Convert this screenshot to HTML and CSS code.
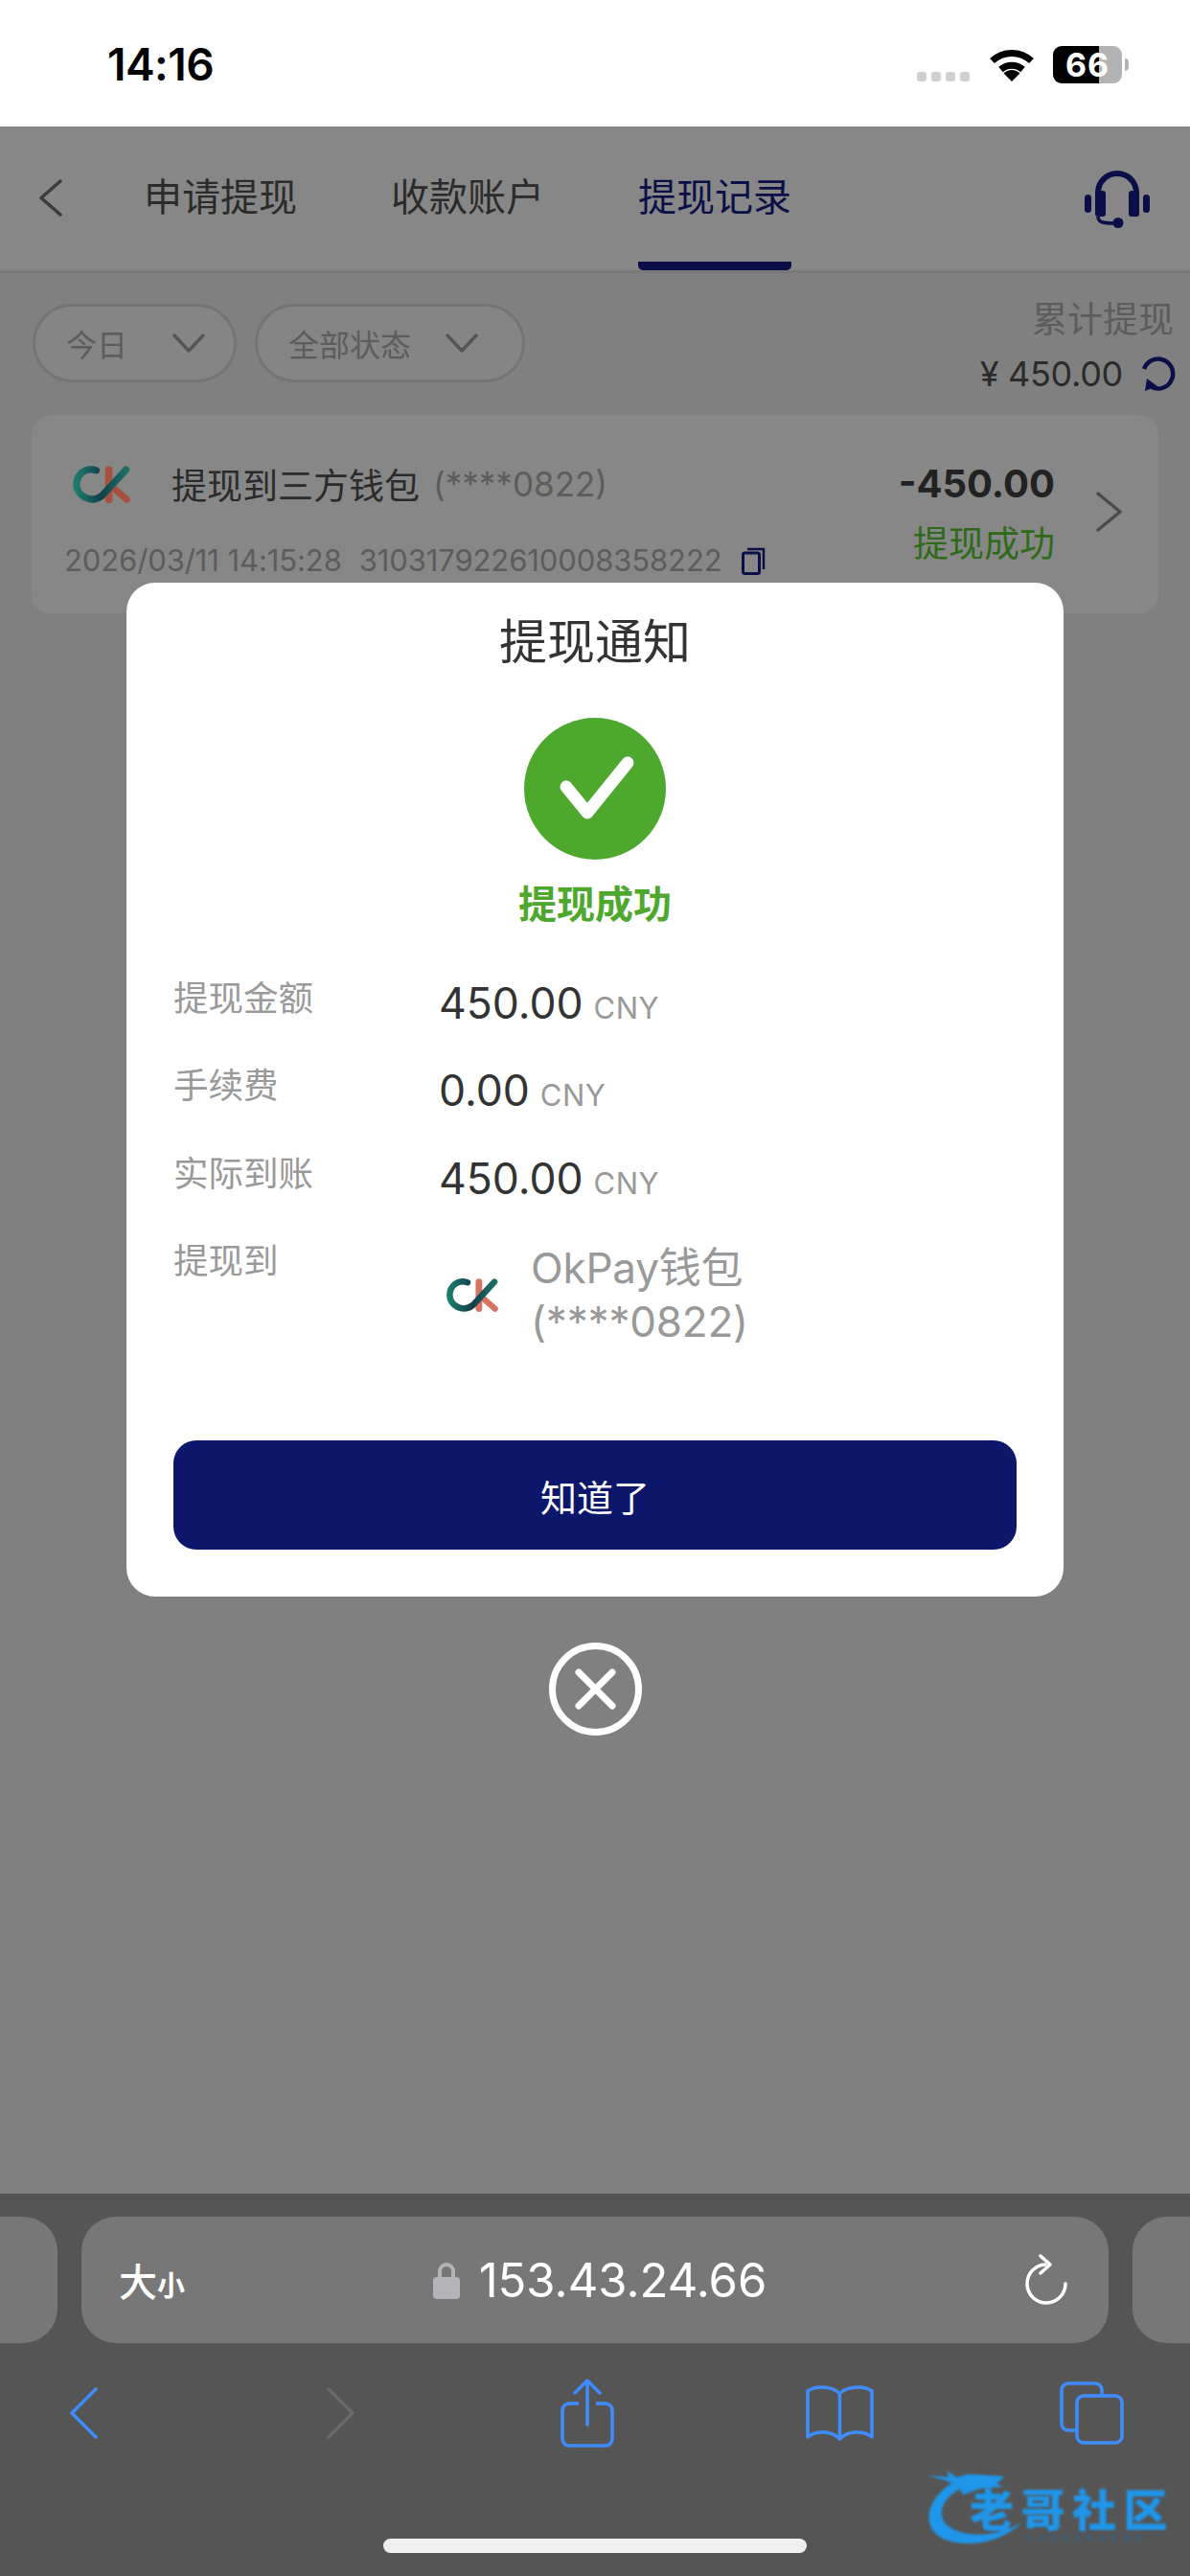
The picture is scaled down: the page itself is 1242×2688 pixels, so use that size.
FILE: index.html
```html
<!DOCTYPE html>
<html lang="zh">
<head>
<meta charset="utf-8">
<title>提现记录</title>
<link rel="stylesheet" href="styles.css">
</head>
<body>
<div class="screen">
  <header class="status">
    <span class="time">14:16</span>
    <span class="dots"><i></i><i></i><i></i><i></i></span>
    <svg class="wifi" viewBox="0 0 48 36"><path d="M3.500 14.500a30 30 0 0 1 41 0" fill="none" stroke="#000" stroke-width="7"/><path d="M12.500 23.500a17.500 17.500 0 0 1 23 0" fill="none" stroke="#000" stroke-width="7"/><path d="M24 36l-8.500-8.500a12 12 0 0 1 17 0z"/></svg>
    <span class="battery">66</span>
    <span class="battery-tip"></span>
  </header>

  <main class="page">
    <nav class="nav">
      <svg class="back" viewBox="0 0 25 39"><path d="M23 2L3 19.500 23 37" fill="none" stroke="#3c3c3c" stroke-width="3.500" stroke-linecap="round" stroke-linejoin="round"/></svg>
      <a class="tab">申请提现</a>
      <a class="tab">收款账户</a>
      <a class="tab active">提现记录</a>
      <svg class="headset" viewBox="0 0 70 62"><path d="M15 30V25a20 20 0 0 1 40 0v5" fill="none" stroke="#0a0f48" stroke-width="6"/><rect x="12" y="23" width="11" height="27" rx="3" fill="#0a0f48"/><rect x="47" y="23" width="11" height="27" rx="3" fill="#0a0f48"/><rect x="1" y="27" width="7" height="19" rx="3.500" fill="#0a0f48"/><rect x="62" y="27" width="7" height="19" rx="3.500" fill="#0a0f48"/><path d="M15 50c0 6 6 7 16 7" fill="none" stroke="#0a0f48" stroke-width="3.500"/><circle cx="36" cy="56.500" r="5.500" fill="#0a0f48"/></svg>
    </nav>

    <section class="filters">
      <button class="pill pill-day"><span>今日</span><svg class="caret" viewBox="0 0 34 20"><path d="M2 2l15 16L32 2" fill="none" stroke="#555" stroke-width="3.500" stroke-linecap="round" stroke-linejoin="round"/></svg></button>
      <button class="pill pill-state"><span>全部状态</span><svg class="caret" viewBox="0 0 34 20"><path d="M2 2l15 16L32 2" fill="none" stroke="#555" stroke-width="3.500" stroke-linecap="round" stroke-linejoin="round"/></svg></button>
      <div class="summary">
        <div class="summary-label">累计提现</div>
        <div class="summary-value"><span>¥ 450.00</span><svg class="refresh" viewBox="0 0 38 36"><path d="M5 13A15.500 15.500 0 1 1 13 32" fill="none" stroke="#0a0f48" stroke-width="4.500"/><path d="M6 36L8 23 19 31z" fill="#0a0f48"/></svg></div>
      </div>
    </section>

    <article class="card">
      <div class="card-left">
        <div class="card-title">
          <svg class="logo" viewBox="78 82 180 122"><defs><linearGradient id="g1" x1="0" y1="0" x2="1" y2="0"><stop offset="0" stop-color="#1d7a6c"/><stop offset=".5" stop-color="#123f4c"/><stop offset="1" stop-color="#1c6f68"/></linearGradient></defs><path d="M190 100V190" stroke="#a8503f" stroke-width="22" stroke-linecap="round" fill="none"/><path d="M198 150L244 190" stroke="#a8503f" stroke-width="20" stroke-linecap="round" fill="none"/><path d="M152 102C118 90 92 115 92 145 92 178 135 205 170 178L242 100" stroke="url(#g1)" stroke-width="21" stroke-linecap="round" fill="none"/></svg>
          <span class="title-text">提现到三方钱包</span>
          <span class="title-acct">(****0822)</span>
        </div>
        <div class="card-meta">
          <span>2026/03/11 14:15:28</span>
          <span>310317922610008358222</span>
          <svg class="copy" viewBox="0 0 25 29"><rect x="1.500" y="6" width="17" height="21.500" rx="2" fill="none" stroke="#0a0f48" stroke-width="3"/><path d="M6 2h17v21" fill="none" stroke="#0a0f48" stroke-width="2.500"/></svg>
        </div>
      </div>
      <div class="card-right">
        <div class="amount">-450.00</div>
        <div class="state">提现成功</div>
      </div>
      <svg class="card-arrow" viewBox="0 0 27 42"><path d="M2 2l23 19L2 40" fill="none" stroke="#4b4b4b" stroke-width="3.500" stroke-linecap="round" stroke-linejoin="round"/></svg>
    </article>

    <div class="dialog">
      <div class="modal">
        <h2 class="modal-title">提现通知</h2>
        <svg class="ok" viewBox="0 0 148 148"><circle cx="74" cy="74" r="74" fill="#4fa82e"/><path d="M44 72l22 27 42-52" fill="none" stroke="#fff" stroke-width="13" stroke-linecap="round" stroke-linejoin="round"/></svg>
        <div class="ok-text">提现成功</div>
        <dl class="rows">
          <div class="row"><dt>提现金额</dt><dd><b>450.00</b><small>CNY</small></dd></div>
          <div class="row"><dt>手续费</dt><dd><b>0.00</b><small>CNY</small></dd></div>
          <div class="row"><dt>实际到账</dt><dd><b>450.00</b><small>CNY</small></dd></div>
          <div class="row"><dt>提现到</dt><dd class="wallet">
            <svg class="logo-sm" viewBox="78 82 180 122"><path d="M190 100V190" stroke="#d8735f" stroke-width="22" stroke-linecap="round" fill="none"/><path d="M198 150L244 190" stroke="#d8735f" stroke-width="20" stroke-linecap="round" fill="none"/><path d="M152 102C118 90 92 115 92 145 92 178 135 205 170 178L242 100" stroke="url(#g1)" stroke-width="21" stroke-linecap="round" fill="none"/></svg>
            <span class="wallet-name">OkPay钱包<br>(****0822)</span></dd></div>
        </dl>
        <button class="confirm">知道了</button>
      </div>
      <svg class="close" viewBox="0 0 97 97"><circle cx="48.500" cy="48.500" r="45" fill="none" stroke="#fff" stroke-width="7"/><path d="M31 31l35 35M66 31L31 66" stroke="#fff" stroke-width="7" stroke-linecap="round"/></svg>
    </div>
  </main>

  <footer class="safari">
    <div class="url-row">
      <div class="side side-left"></div>
      <div class="url">
        <span class="aa">大<small>小</small></span>
        <span class="addr">
          <svg class="lock" viewBox="0 0 28 39"><path d="M7 18V10a7 7 0 0 1 14 0v8" fill="none" stroke="#b3b3b8" stroke-width="4"/><rect y="16" width="28" height="23" rx="4" fill="#b3b3b8"/></svg>
          153.43.24.66
        </span>
        <svg class="reload" viewBox="0 0 46 54"><path d="M22 11A20 20 0 1 0 43 31" fill="none" stroke="#fff" stroke-width="3.500" stroke-linecap="round"/><path d="M17 2l10 9-10 9" fill="none" stroke="#fff" stroke-width="3.500" stroke-linecap="round" stroke-linejoin="round"/></svg>
      </div>
      <div class="side side-right"></div>
    </div>
    <div class="tools">
      <span class="tool"><svg class="t-back" viewBox="0 0 30 54"><path d="M28 2L3 27l25 25" fill="none" stroke="#3f8cff" stroke-width="3.500" stroke-linecap="round" stroke-linejoin="round"/></svg></span>
      <span class="tool tool-fwd"><svg class="t-back" viewBox="0 0 30 54"><path d="M2 2l25 25L2 52" fill="none" stroke="#6b6b6b" stroke-width="3.500" stroke-linecap="round" stroke-linejoin="round"/></svg></span>
      <span class="tool"><svg class="t-share" viewBox="0 0 56 72"><path d="M19 26H9a7 7 0 0 0-7 7v30a7 7 0 0 0 7 7h38a7 7 0 0 0 7-7V33a7 7 0 0 0-7-7H37" fill="none" stroke="#3f8cff" stroke-width="3.500"/><path d="M28 48V3M15 15L28 2l13 13" fill="none" stroke="#3f8cff" stroke-width="3.500" stroke-linecap="round" stroke-linejoin="round"/></svg></span>
      <span class="tool"><svg class="t-book" viewBox="0 0 71 58"><path d="M35.500 9C30 2 12 -1 2 6V54C12 46 28 48 35.500 56 43 48 59 46 69 54V6C59 -1 41 2 35.500 9zM35.500 9V56" fill="none" stroke="#3f8cff" stroke-width="3.500" stroke-linejoin="round"/></svg></span>
      <span class="tool"><svg class="t-tabs" viewBox="0 0 67 66"><rect x="18" y="15" width="47" height="49" rx="7" fill="none" stroke="#3f8cff" stroke-width="3.500"/><path d="M17 51H9a7 7 0 0 1-7-7V9a7 7 0 0 1 7-7h28a7 7 0 0 1 7 7v5" fill="none" stroke="#3f8cff" stroke-width="3.500"/></svg></span>
    </div>
    <div class="home"></div>
    <div class="watermark">
      <svg class="dragon" viewBox="0 0 906 384"><path d="M165 90C100 130 70 190 100 240 140 300 300 300 380 215 310 262 190 270 140 220 110 180 140 130 200 105z" fill="#1f96ea"/><path d="M80 68L150 75 145 55 175 75 210 65 325 72 300 95 320 105 250 110 195 130 180 100 140 85z" fill="#1f96ea"/></svg>
      <span class="wm-cn">老哥社区</span>
      <span class="wm-en">LAOGESHEQU</span>
    </div>
  </footer>
</div>
</body>
</html>
```
FILE: styles.css
```css
* { box-sizing: border-box; }
html, body { margin: 0; padding: 0; }
body { font-family: Inter, "Noto Sans CJK SC", sans-serif; }
.screen { width: 1242px; height: 2688px; display: flex; flex-direction: column; overflow: hidden; }

/* status bar */
.status { height: 132px; background: #fff; display: flex; align-items: flex-start; padding: 43px 0 0 112px; flex: none; }
.time { font-size: 46px; line-height: 48px; font-weight: 600; color: #000; letter-spacing: -.5px; }
.dots { margin: 32px 0 0 auto; display: flex; gap: 5px; }
.dots i { width: 10px; height: 10px; border-radius: 3px; background: #cfcfcf; }
.wifi { width: 48px; height: 36px; margin: 6px 0 0 20px; }
.battery { width: 72px; height: 39px; margin: 5px 0 0 19px; border-radius: 9px; background: linear-gradient(90deg, #000 66.6%, #b3b3b3 66.6%); color: #fff; font-size: 34px; line-height: 39px; font-weight: 700; text-align: center; letter-spacing: 1px; }
.battery-tip { width: 4px; height: 13px; margin: 18px 64px 0 3px; border-radius: 0 4px 4px 0; background: #b3b3b3; }

/* page */
.page { flex: 1; position: relative; background: #808080; min-height: 0; }
.nav { height: 153px; background: #878787; border-bottom: 3px solid #787878; display: flex; padding-left: 40px; }
.back { width: 25px; height: 39px; margin: 55px 85px 0 0; }
.tab { width: 160px; height: 150px; margin-right: 98px; border-bottom: 9px solid transparent; display: flex; align-items: center; justify-content: center; font-size: 40px; color: #2b2b2b; white-space: nowrap; }
.tab.active { color: #0a0f48; border-bottom-color: #0a0f48; border-radius: 5px; }
.headset { width: 70px; height: 62px; margin: 44px 41px 0 auto; }

.filters { display: flex; padding: 32px 15px 0 34px; height: 148px; align-items: flex-start; background: #808080; }
.pill { height: 82px; border: 3px solid #747474; border-radius: 41px; background: #858585; display: flex; align-items: center; padding: 0 0 0 32px; font: inherit; font-size: 32px; color: #5c5c5c; margin-right: 19px; }
.pill-day { width: 213px; }
.pill-state { width: 282px; }
.caret { width: 34px; height: 20px; }
.pill-day .caret { margin-left: 47px; }
.pill-state .caret { margin-left: 36px; }
.summary { margin-left: auto; text-align: right; margin-top: -8px; }
.summary-label { font-size: 37px; line-height: 50px; color: #5c5c5c; padding-right: 2px; }
.summary-value { display: flex; align-items: center; font-size: 36px; line-height: 50px; color: #2b2b2b; margin-top: 6px; }
.summary-value span { letter-spacing: -.3px; }
.refresh { width: 38px; height: 36px; margin-left: 17px; }

.card { margin: 0 33px; height: 207px; background: #878787; border-radius: 20px; display: flex; padding: 0 38px 0 34px; }
.card-left { flex: 1; padding-top: 50px; }
.card-title { display: flex; align-items: center; height: 44px; font-size: 37px; color: #2b2b2b; }
.logo { width: 62px; height: 42px; margin: 0 42px 0 8px; }
.title-text { margin-right: 14px; }
.title-acct { color: #5c5c5c; font-size: 35px; }
.card-meta { display: flex; align-items: center; margin-top: 40px; font-size: 31px; line-height: 36px; color: #5c5c5c; white-space: nowrap; }
.card-meta span { letter-spacing: -.1px; }
.card-meta span:first-child { margin-right: 18px; }
.copy { width: 25px; height: 29px; margin-left: 20px; }
.card-right { padding-top: 49px; text-align: right; margin-right: 43px; }
.amount { font-size: 40px; line-height: 46px; font-weight: 700; color: #222; }
.state { font-size: 37px; line-height: 50px; margin-top: 15px; color: #2e6a18; }
.card-arrow { width: 27px; height: 42px; margin-top: 80px; }

/* dialog */
.dialog { position: absolute; left: 132px; top: 476px; width: 978px; display: flex; flex-direction: column; align-items: center; gap: 48px; }
.modal { width: 978px; height: 1058px; background: #fff; border-radius: 30px; padding: 30px 49px 49px; display: flex; flex-direction: column; align-items: center; }
.modal-title { margin: 0; font-size: 50px; line-height: 64px; font-weight: 400; color: #333; }
.ok { width: 148px; height: 148px; margin-top: 47px; flex: none; }
.ok-text { font-size: 40px; line-height: 56px; font-weight: 700; color: #4fa82e; margin-top: 19px; }
.rows { margin: 45px 0 0; width: 100%; }
.row { display: flex; height: 91.4px; align-items: flex-start; }
.row dt { width: 277px; font-size: 36.500px; line-height: 50px; color: #999; }
.row dd { margin: 2px 0 0; display: flex; align-items: baseline; line-height: 56px; }
.row b { font-size: 44.500px; font-weight: 400; color: #333; }
.row small { font-size: 31px; color: #999; margin-left: 11px; letter-spacing: .5px; }
.row dd.wallet { align-items: center; margin-top: 4px; }
.logo-sm { width: 56px; height: 38px; margin: 0 33px 0 7px; }
.wallet-name { font-size: 44px; line-height: 56px; color: #999; letter-spacing: -.2px; }
.confirm { width: 880px; height: 114px; margin-top: auto; border: 0; border-radius: 24px; background: #0c176b; color: #fff; font: inherit; font-size: 38px; }
.close { width: 97px; height: 97px; }

/* safari */
.safari { height: 399px; flex: none; background: #555; position: relative; display: flex; flex-direction: column; }
.url-row { display: flex; gap: 25px; margin-top: 24px; height: 132px; }
.side { width: 60px; background: #777; }
.side-left { border-radius: 0 36px 36px 0; }
.side-right { border-radius: 36px 0 0 36px; }
.url { width: 1072px; background: #777; border-radius: 36px; display: flex; align-items: center; padding: 0 42px 0 39px; justify-content: space-between; color: #fff; }
.aa { font-size: 40px; font-weight: 500; }
.aa small { font-size: 29px; font-weight: 700; }
.addr { display: flex; align-items: center; font-size: 49px; position: relative; left: -5px; }
.lock { width: 28px; height: 39px; margin-right: 20px; }
.reload { width: 46px; height: 54px; }
.tools { display: flex; gap: 163px; padding-left: 37px; margin-top: 36px; height: 74px; }
.tool { width: 100px; display: flex; justify-content: center; align-items: center; }
.tool-fwd { position: relative; left: 6px; }
.t-back { width: 30px; height: 54px; }
.t-share { width: 56px; height: 72px; }
.t-book { width: 71px; height: 58px; }
.t-tabs { width: 67px; height: 66px; }
.home { width: 442px; height: 15px; border-radius: 8px; background: #efefef; margin: 94px 0 0 400px; }
.watermark { position: absolute; left: 940px; top: 271px; width: 302px; height: 128px; filter: blur(.8px); }
.dragon { position: absolute; left: 0; top: 0; width: 302px; height: 128px; }
.wm-cn { position: absolute; left: 72px; top: 38px; font-size: 46px; line-height: 42px; font-weight: 900; color: #1f96ea; letter-spacing: 7.500px; white-space: nowrap; }
.wm-en { position: absolute; left: 132px; top: 83px; font-size: 9px; line-height: 11px; color: #1f6fa8; letter-spacing: 6.500px; white-space: nowrap; }
```
